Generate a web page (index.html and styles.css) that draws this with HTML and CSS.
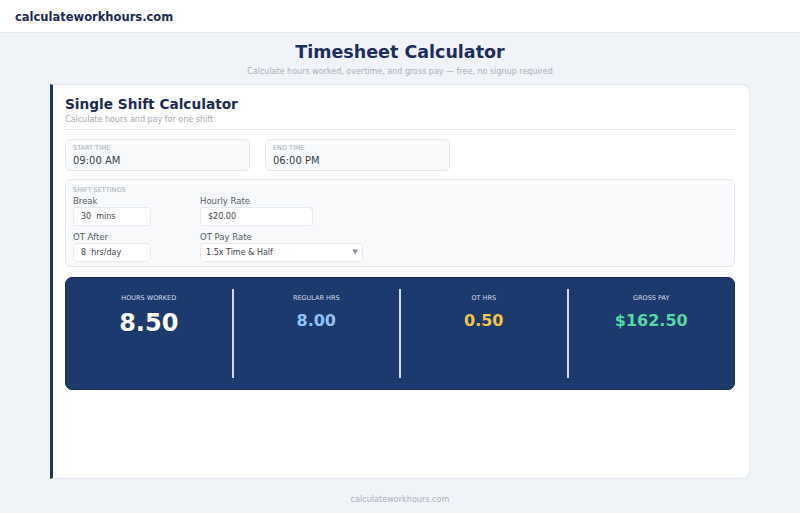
FILE: index.html
```html
<!DOCTYPE html>
<html lang="en">
<head>
  <meta charset="UTF-8" />
  <meta name="viewport" content="width=device-width, initial-scale=1" />
  <title>Timesheet Calculator</title>
  <link rel="stylesheet" href="styles.css">
</head>
<body>
  <header class="topbar">
    <span class="logo">calculateworkhours.com</span>
  </header>

  <main class="page">
    <div class="hero">
      <h1>Timesheet Calculator</h1>
      <p>Calculate hours worked, overtime, and gross pay — free, no signup required</p>
    </div>

    <section class="card">
      <h2>Single Shift Calculator</h2>
      <p class="card-sub">Calculate hours and pay for one shift</p>

      <div class="time-row">
        <div class="time-box">
          <span class="tiny-label">START TIME</span>
          <span class="time-value">09:00 AM</span>
        </div>
        <div class="time-box">
          <span class="tiny-label">END TIME</span>
          <span class="time-value">06:00 PM</span>
        </div>
      </div>

      <div class="settings">
        <span class="tiny-label">SHIFT SETTINGS</span>
        <div class="settings-grid">
          <div class="field">
            <label>Break</label>
            <div class="input short">30&nbsp; mins</div>
          </div>
          <div class="field">
            <label>Hourly Rate</label>
            <div class="input rate">$20.00</div>
          </div>
          <div class="field">
            <label>OT After</label>
            <div class="input short">8&nbsp; hrs/day</div>
          </div>
          <div class="field">
            <label>OT Pay Rate</label>
            <div class="input select">1.5x Time &amp; Half <span class="caret">▼</span></div>
          </div>
        </div>
      </div>

      <div class="results">
        <div class="stat">
          <span class="stat-label">HOURS WORKED</span>
          <span class="stat-value big">8.50</span>
        </div>
        <div class="stat">
          <span class="stat-label">REGULAR HRS</span>
          <span class="stat-value blue">8.00</span>
        </div>
        <div class="stat">
          <span class="stat-label">OT HRS</span>
          <span class="stat-value yellow">0.50</span>
        </div>
        <div class="stat">
          <span class="stat-label">GROSS PAY</span>
          <span class="stat-value green">$162.50</span>
        </div>
      </div>
    </section>
  </main>

  <footer class="footer">calculateworkhours.com</footer>
</body>
</html>
```

FILE: styles.css
```css
* {
  box-sizing: border-box;
  margin: 0;
  padding: 0;
}

body {
  font-family: "DejaVu Sans", "Noto Sans", sans-serif;
  background-color: #f0f3f7;
  color: #333;
}

.topbar {
  height: 33px;
  background: #ffffff;
  border-bottom: 1px solid #e3e7ee;
  display: flex;
  align-items: center;
  padding-left: 15px;
  padding-top: 1px;
}

.logo {
  font-size: 11.5px;
  font-weight: bold;
  color: #1b2a52;
}

.page {
  padding: 0 50px;
}

.hero {
  text-align: center;
  padding-top: 8px;
}

.hero h1 {
  font-size: 17.5px;
  color: #1b2e5e;
  line-height: 22px;
}

.hero p {
  font-size: 8px;
  color: #a9afb9;
  margin-top: 3px;
  line-height: 12px;
}

.card {
  margin-top: 6px;
  height: 395px;
  background: #ffffff;
  border: 1px solid #e3e7f0;
  border-left: 3px solid #1c3566;
  border-radius: 0 8px 8px 0;
  padding: 10px 14px 0 12px;
}

.card h2 {
  font-size: 13.7px;
  color: #1b2a52;
  line-height: 18px;
}

.card-sub {
  font-size: 8px;
  color: #a3a9b3;
  line-height: 12px;
  margin-top: 1px;
  padding-bottom: 3px;
  border-bottom: 1px solid #e3e6eb;
}

.tiny-label {
  display: block;
  font-size: 6.5px;
  color: #a6acb5;
  line-height: 9px;
}

.time-row {
  display: flex;
  gap: 15px;
  margin-top: 9px;
}

.time-box {
  width: 185px;
  height: 32px;
  background: #f8f9fb;
  border: 1px solid #e4e7ec;
  border-radius: 5px;
  padding: 4px 7px;
}

.time-value {
  display: block;
  font-size: 10px;
  color: #3a3f48;
  line-height: 14px;
  margin-top: 1px;
}

.settings {
  margin-top: 8px;
  height: 88px;
  background: #f8f9fb;
  border: 1px solid #e4e7ec;
  border-radius: 5px;
  padding: 6px 7px 5px;
}

.settings-grid {
  display: grid;
  grid-template-columns: 127px 170px;
  row-gap: 6px;
  margin-top: 1px;
}

.field label {
  display: block;
  font-size: 8.5px;
  color: #555b66;
  line-height: 11px;
}

.input {
  height: 19px;
  background: #ffffff;
  border: 1px solid #e6e9ee;
  border-radius: 4px;
  font-size: 8px;
  color: #3d424b;
  line-height: 17px;
  padding-left: 7px;
  position: relative;
}

.short {
  width: 78px;
}

.rate {
  width: 113px;
}

.select {
  width: 163px;
  padding-left: 5px;
}

.caret {
  position: absolute;
  right: 4px;
  top: 0;
  font-size: 7px;
  color: #8c93a0;
}

.results {
  display: flex;
  margin-top: 10px;
  height: 113px;
  background: #1c3a6d;
  border: 1px solid #132a52;
  border-radius: 7px;
  padding: 11px 0;
}

.stat {
  flex: 1;
  display: flex;
  flex-direction: column;
  align-items: center;
  padding-top: 5px;
  border-right: 2px solid #d5dbe6;
}

.stat:last-child {
  border-right: none;
}

.stat-label {
  font-size: 6.5px;
  color: #d9dfea;
  line-height: 9px;
}

.stat-value {
  font-weight: bold;
  font-size: 16px;
  line-height: 20px;
  margin-top: 8px;
}

.big {
  font-size: 24px;
  line-height: 28px;
  color: #ffffff;
  margin-top: 6px;
}

.blue {
  color: #8fc4f8;
}

.yellow {
  color: #f4c443;
}

.green {
  color: #55d8a2;
}

.footer {
  text-align: center;
  font-size: 9px;
  font-stretch: condensed;
  color: #aab0ba;
  margin-top: 15px;
}
```
